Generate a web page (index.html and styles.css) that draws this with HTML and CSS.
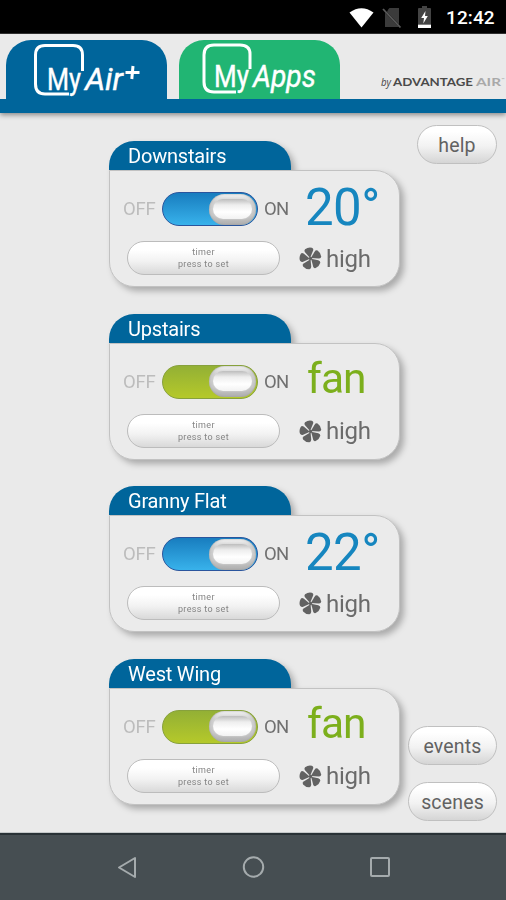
FILE: index.html
```html
<!DOCTYPE html>
<html lang="en">
<head>
<meta charset="utf-8">
<title>MyAir+</title>
<link rel="stylesheet" href="styles.css">
</head>
<body>
<svg class="defs" width="0" height="0" aria-hidden="true">
  <symbol id="fan-icon" viewBox="0 0 22 22">
    <g fill="#626262">
      <path id="blade" d="M10.600 10.500 6 5.300Q4.600 3.600 5.800 2.200Q8.700-.1 12.300 .7Q14.200 1.300 13.500 3.300Z"/>
      <use href="#blade" transform="rotate(72 11 11)"/>
      <use href="#blade" transform="rotate(144 11 11)"/>
      <use href="#blade" transform="rotate(216 11 11)"/>
      <use href="#blade" transform="rotate(288 11 11)"/>
    </g>
    <circle cx="11" cy="11" r="1.600" fill="#626262"/>
  </symbol>
</svg>
<div class="screen">
  <div class="status">
    <svg class="wifi" width="25" height="20" viewBox="0 0 25 20"><path d="M.5 4.500Q12.500-4 24.500 4.500L12.500 19.500Z" fill="#fff"/></svg>
    <svg class="sim" width="20" height="22" viewBox="0 0 20 22"><path d="M7.500 1H17V17.500L5 5Q6 2 7.500 1ZM3 5.500 17 20H3Z" fill="#3b3b3b"/><path d="M1 2 18.500 20.500" stroke="#5a5a5a" stroke-width="1.800"/></svg>
    <svg class="battery" width="13" height="22" viewBox="0 0 13 22"><path d="M4 0H9V2H12Q13 2 13 3V18H0V3Q0 2 1 2H4Z" fill="#444"/><path d="M0 18.500H13V22H0Z" fill="#fff"/><path d="M7.500 5 3.200 12H6L5.300 17.500 9.800 10H7Z" fill="#fff"/></svg>
    <span class="clock">12:42</span>
  </div>
  <header class="header">
    <div class="tab tab-air">
      <svg width="161" height="59" viewBox="0 0 161 59">
        <path d="M76.500 31V15Q76.500 5.500 67 5.500H39Q29.500 5.500 29.500 15V44Q29.500 54 39 54H63" fill="none" stroke="#fff" stroke-width="3"/>
        <text class="logo" x="41" y="50" textLength="34" lengthAdjust="spacingAndGlyphs">My</text>
        <text class="logo slant" x="79" y="50" textLength="38" lengthAdjust="spacingAndGlyphs">Air</text>
        <path d="M119.500 32.500H133.500M127 26 125.800 39" stroke="#fff" stroke-width="3"/>
      </svg>
    </div>
    <div class="tab tab-apps">
      <svg width="161" height="59" viewBox="0 0 161 59">
        <path d="M71 29V14Q71 5 61 5H35Q25 5 25 15V42Q25 52 35 52H57" fill="none" stroke="#fff" stroke-width="3"/>
        <text class="logo" x="35" y="47" textLength="35" lengthAdjust="spacingAndGlyphs">My</text>
        <text class="logo slant" x="74" y="47" textLength="63" lengthAdjust="spacingAndGlyphs">Apps</text>
      </svg>
    </div>
    <svg class="brand" width="126" height="20" viewBox="0 0 126 20">
      <text class="by" x="1" y="12" textLength="10" lengthAdjust="spacingAndGlyphs">by</text>
      <text class="adv" x="13" y="12" textLength="80" lengthAdjust="spacingAndGlyphs">ADVANTAGE</text>
      <text class="air" x="96" y="12" textLength="25" lengthAdjust="spacingAndGlyphs">AIR</text>
      <text class="tm" x="121.500" y="7">™</text>
    </svg>
  </header>
  <main class="main">
    <div class="zones">
      <section class="zone">
        <h2 class="name">Downstairs</h2>
        <div class="panel">
          <div class="power"><span class="off">OFF</span><div class="switch cool"><i class="knob"></i></div><span class="on">ON</span></div>
          <div class="value temp">20°</div>
          <div class="timer"><span>timer</span><span>press to set</span></div>
          <div class="speed"><svg width="23" height="23"><use href="#fan-icon"/></svg><span>high</span></div>
        </div>
      </section>
      <section class="zone">
        <h2 class="name">Upstairs</h2>
        <div class="panel">
          <div class="power"><span class="off">OFF</span><div class="switch vent"><i class="knob"></i></div><span class="on">ON</span></div>
          <div class="value mode">fan</div>
          <div class="timer"><span>timer</span><span>press to set</span></div>
          <div class="speed"><svg width="23" height="23"><use href="#fan-icon"/></svg><span>high</span></div>
        </div>
      </section>
      <section class="zone">
        <h2 class="name">Granny Flat</h2>
        <div class="panel">
          <div class="power"><span class="off">OFF</span><div class="switch cool"><i class="knob"></i></div><span class="on">ON</span></div>
          <div class="value temp">22°</div>
          <div class="timer"><span>timer</span><span>press to set</span></div>
          <div class="speed"><svg width="23" height="23"><use href="#fan-icon"/></svg><span>high</span></div>
        </div>
      </section>
      <section class="zone">
        <h2 class="name">West Wing</h2>
        <div class="panel">
          <div class="power"><span class="off">OFF</span><div class="switch vent"><i class="knob"></i></div><span class="on">ON</span></div>
          <div class="value mode">fan</div>
          <div class="timer"><span>timer</span><span>press to set</span></div>
          <div class="speed"><svg width="23" height="23"><use href="#fan-icon"/></svg><span>high</span></div>
        </div>
      </section>
    </div>
    <aside class="side">
      <div class="pill help">help</div>
      <div class="pill">events</div>
      <div class="pill">scenes</div>
    </aside>
  </main>
  <nav class="nav">
    <svg width="22" height="24" viewBox="0 0 22 24"><path d="M3 11.500 19 2V21Z" fill="none" stroke="#a5abad" stroke-width="2" stroke-linejoin="round"/></svg>
    <svg width="24" height="24" viewBox="0 0 24 24"><circle cx="11.500" cy="11" r="9.700" fill="none" stroke="#a5abad" stroke-width="2"/></svg>
    <svg width="22" height="24" viewBox="0 0 22 24"><rect x="2" y="2" width="18" height="18" rx="1" fill="none" stroke="#a5abad" stroke-width="2"/></svg>
  </nav>
</div>
</body>
</html>
```
FILE: styles.css
```css
* { box-sizing: border-box; }
body { margin: 0; font-family: Roboto, sans-serif; }
.defs { position: absolute; }
.screen { width: 506px; height: 900px; display: flex; flex-direction: column; background: #eaeaea; overflow: hidden; }

.status { height: 34px; background: #000; display: flex; padding: 7px 10px 0 0; justify-content: flex-end; border-bottom: 1px solid #333; }
.wifi { margin-right: 8px; margin-top: 1px; transform: translateX(-2px); }
.sim { margin-right: 15px; transform: translateX(-2px); }
.battery { margin-right: 14px; margin-top: -1px; transform: translateX(-1px); }
.clock { color: #fff; font-size: 19px; line-height: 22px; font-weight: 500; letter-spacing: .1px; width: 50px; white-space: nowrap; }

.header { height: 79px; padding: 6px 0 0 6px; display: flex; gap: 12px; border-bottom: 14px solid #00659b; box-shadow: 0 2px 5px rgba(0, 0, 0, .42); position: relative; }
.tab { width: 161px; height: 59px; border-radius: 25px 25px 0 0; flex: none; }
.tab svg { display: block; }
.tab-air { background: #00659b; }
.tab-apps { background: #21b573; }
.logo { font: 400 31px Roboto, sans-serif; fill: #fff; stroke: #fff; stroke-width: .4px; }
.slant { font-style: italic; }
.brand { margin: 34px 0 0 28px; flex: none; }
.by { font: italic 10px "Open Sans", sans-serif; fill: #444; }
.adv { font: 700 11px Lato, sans-serif; fill: #4a4a4a; }
.air { font: 700 11px Lato, sans-serif; fill: #a9a9a9; }
.tm { font: 4px Lato, sans-serif; fill: #999; }

.main { height: 720px; display: grid; grid-template-columns: 291px 106px; padding-left: 109px; border-bottom: 1px solid #c4c8c9; }
.zones { padding-top: 28px; display: flex; flex-direction: column; gap: 26.5px; }
.zone { height: 146px; flex: none; filter: drop-shadow(4px 4px 3px rgba(0, 0, 0, .27)); }
.name { margin: 0; width: 182px; height: 29px; border-radius: 25px 25px 0 0; background: #00659b; color: #fff; font-size: 20px; line-height: 31px; font-weight: 400; padding-left: 19px; letter-spacing: -.2px; }
.panel { height: 117px; width: 291px; background: #ebebeb; border: 1.500px solid #c2c2c2; border-radius: 0 25px 25px 25px; display: grid; grid-template-columns: 186px 1fr; grid-template-rows: 70px 34px; padding-left: 1px; }
.power { display: flex; align-items: center; padding: 6px 0 0 12px; font-size: 18.500px; }
.off { width: 39px; color: #bcbcbc; letter-spacing: -.2px; }
.on { margin-left: 6px; color: #707070; letter-spacing: -.7px; }
.switch { width: 96px; height: 34px; flex: none; border-radius: 17px; display: flex; align-items: center; justify-content: flex-end; padding-right: 1px; }
.cool { background: linear-gradient(#187dbf, #38b2eb); border: 1.500px solid #2a559d; }
.vent { background: linear-gradient(#93b035, #b5c92a); border: 1.500px solid #87a13c; }
.knob { width: 47px; height: 31px; padding: 5px 4px; border-radius: 16px; background: linear-gradient(#f4f4f4, #cfcfcf 25%, #c6c6c6 70%, #aeaeae); box-shadow: inset 0 0 2px #999; display: block; }
.knob::before { content: ""; display: block; height: 20px; border-radius: 10px; background: linear-gradient(#bdbdbd, #eee 30%, #fff 65%, #f2f2f2); box-shadow: 0 0 2px #ddd; }
.value { padding-left: 8px; white-space: nowrap; }
.temp { color: #1686bf; font-size: 51px; line-height: 74px; letter-spacing: -.6px; }
.mode { color: #7caf1c; font-size: 42.500px; line-height: 70px; padding-left: 10px; letter-spacing: -.9px; }
.timer { width: 153px; height: 34px; margin-left: 16px; border: 1.500px solid #bcbcbc; border-radius: 17px; background: linear-gradient(#fff 25%, #f2f2f2 60%, #d9d9d9); display: flex; flex-direction: column; align-items: center; justify-content: center; font-size: 9px; line-height: 12px; color: #858585; letter-spacing: .35px; }
.speed { display: flex; align-items: center; gap: 4px; padding-left: 2px; margin-top: 1px; color: #6b6b6b; font-size: 24px; line-height: 34px; letter-spacing: -.3px; }

.side { padding: 12px 9px 11px 8px; display: flex; flex-direction: column; align-items: flex-end; gap: 17px; }
.pill { width: 89px; height: 39px; border: 1.500px solid #c0c0c0; border-radius: 20px; background: linear-gradient(#fff 15%, #f2f2f2 55%, #d5d5d5); color: #626262; font-size: 19.500px; line-height: 39px; text-align: center; letter-spacing: .15px; }
.help { width: 80px; margin-bottom: auto; }

.nav { height: 67px; background: #464e52; border-top: 2px solid #293236; display: flex; align-items: center; justify-content: space-between; padding: 1px 115px 0 116px; }
```
